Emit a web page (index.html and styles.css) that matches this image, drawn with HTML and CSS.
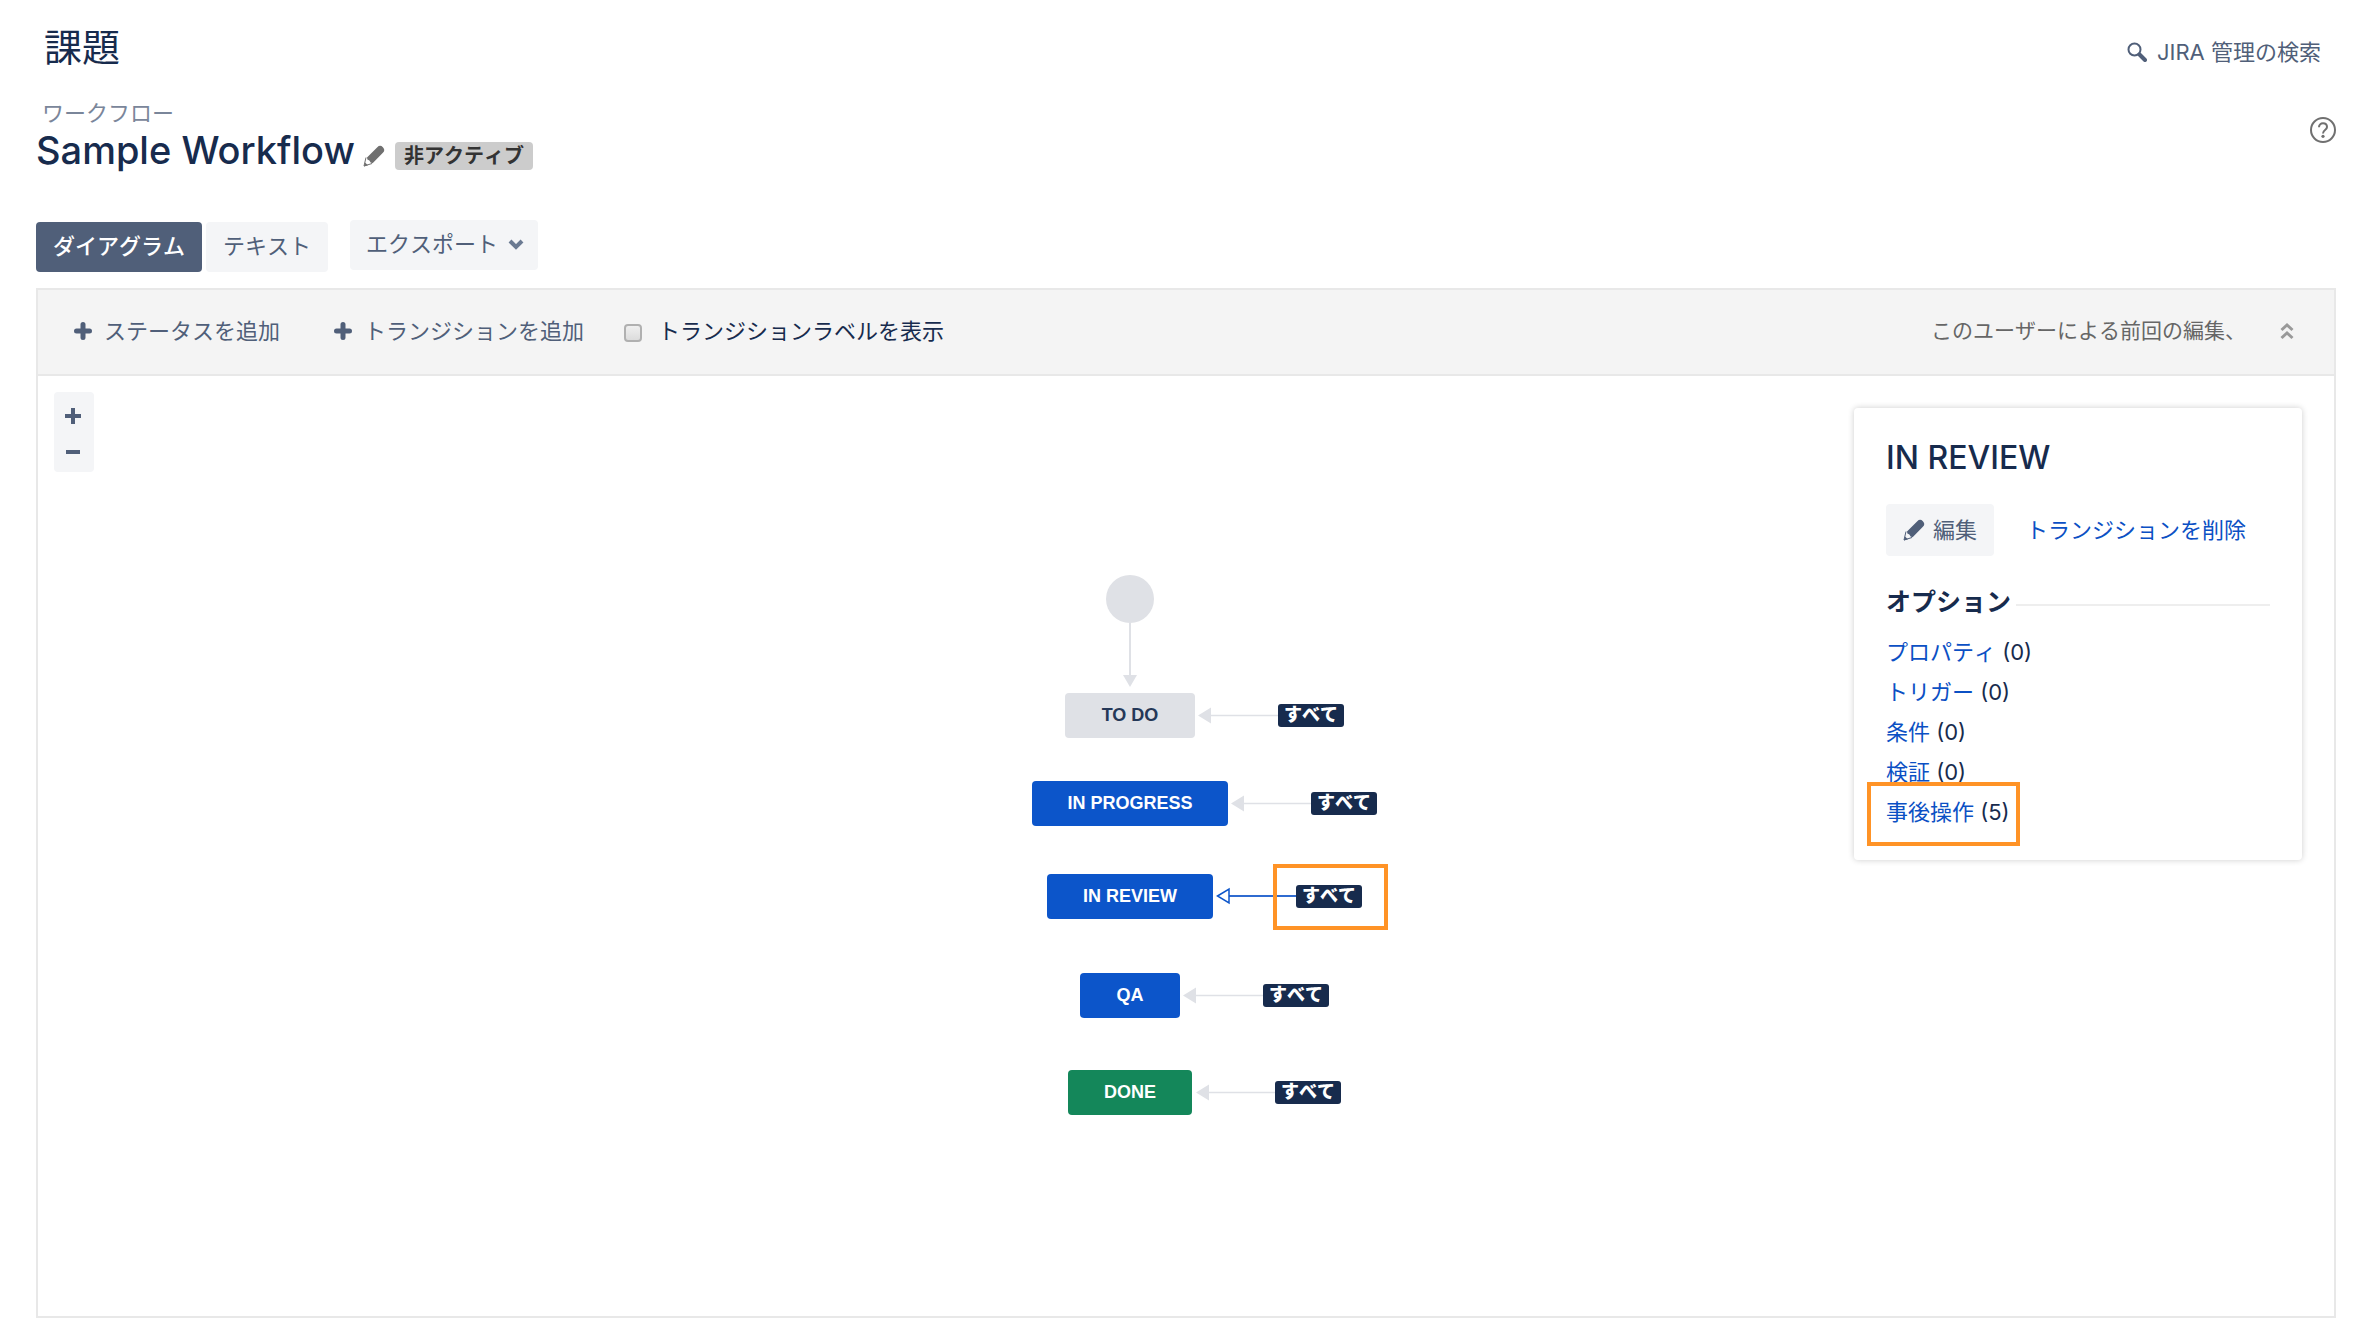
FILE: index.html
```html
<!DOCTYPE html>
<html lang="ja">
<head>
    <meta charset="UTF-8">
    <meta name="viewport" content="width=device-width, initial-scale=1.0">
    <title>Sample Workflow - JIRA</title>
    <link rel="stylesheet" href="styles.css">
</head>
<body>
    <svg class="sprite" aria-hidden="true">
        <symbol id="pencil" viewBox="0 0 22 22">
            <path d="M4 12.500 14.300 2.200a4 4 0 0 1 5.600 0 4 4 0 0 1 0 5.600L9.600 18.200 7.600 17.600 6.400 15.600 4.400 14.600z"/>
            <path d="M3 12.500 1 21l8-2.500" fill="none" stroke="currentColor" stroke-width="1"/>
            <path d="M1 21.500l1-4 3 2.800z"/>
        </symbol>
        <symbol id="plus" viewBox="0 0 18 18">
            <path d="M9 2.5v13M2.5 9h13" stroke="currentColor" stroke-width="5" stroke-linecap="round"/>
        </symbol>
    </svg>

    <header class="top">
        <h1>課題</h1>
        <a href="#" class="search">
            <svg width="20" height="20" viewBox="0 0 20 20"><circle cx="7.5" cy="7.5" r="6" fill="none" stroke="currentColor" stroke-width="2"/><path d="M12.5 12.5 18 18" stroke="currentColor" stroke-width="4" stroke-linecap="round"/></svg>
            JIRA 管理の検索
        </a>
    </header>

    <main>
        <div class="heading">
            <div>
                <a href="#" class="crumb">ワークフロー</a>
                <div class="title">
                    <h2>Sample Workflow</h2>
                    <button type="button" class="rename" aria-label="名前を編集"><svg width="22" height="22"><use href="#pencil"/></svg></button>
                    <span class="lozenge">非アクティブ</span>
                </div>
            </div>
            <a href="#" class="help" aria-label="ヘルプ">
                <svg width="26" height="26" viewBox="0 0 26 26"><circle cx="13" cy="13" r="12" fill="none" stroke="currentColor" stroke-width="2"/><path d="M9 10.200C9 7.900 10.700 6.300 13 6.300s4 1.500 4 3.700c0 3-4 3.100-4 6.400" fill="none" stroke="currentColor" stroke-width="2"/><circle cx="13" cy="19.300" r="1.600" fill="currentColor"/></svg>
            </a>
        </div>

        <div class="views">
            <button type="button" class="btn active">ダイアグラム</button>
            <button type="button" class="btn">テキスト</button>
            <button type="button" class="btn export">エクスポート
                <svg width="16" height="12" viewBox="0 0 16 12"><path d="M2 3l6 6 6-6" fill="none" stroke="currentColor" stroke-width="4"/></svg>
            </button>
        </div>

        <section class="designer">
            <div class="toolbar">
                <button type="button" class="add"><svg width="18" height="18"><use href="#plus"/></svg>ステータスを追加</button>
                <button type="button" class="add"><svg width="18" height="18"><use href="#plus"/></svg>トランジションを追加</button>
                <input type="checkbox" id="labels">
                <label for="labels">トランジションラベルを表示</label>
                <span class="edited">このユーザーによる前回の編集、</span>
                <button type="button" class="collapse" aria-label="折りたたむ">
                    <svg width="14" height="18" viewBox="0 0 14 18"><path d="M1.500 8 7 3l5.500 5M1.500 16 7 11l5.500 5" fill="none" stroke="currentColor" stroke-width="3"/></svg>
                </button>
            </div>

            <div class="canvas">
                <div class="zoom">
                    <button type="button" aria-label="拡大"><svg width="16" height="18" viewBox="0 0 16 18"><path d="M8 1v16M0 9h16" stroke="currentColor" stroke-width="4"/></svg></button>
                    <button type="button" aria-label="縮小"><svg width="16" height="18" viewBox="0 0 16 18"><path d="M1 9h14" stroke="currentColor" stroke-width="4"/></svg></button>
                </div>

                <div class="diagram">
                    <svg class="edges" width="424" height="560" viewBox="0 0 424 560">
                        <g stroke="#dfe1e6" stroke-width="2">
                            <path d="M156 59v53"/>
                            <path d="M236 151.500h68M270 239.500h67M222 431.500h67M234 528.500h67" stroke-width="1.500"/>
                        </g>
                        <g fill="#dfe1e6">
                            <path d="M149 111h14l-7 12z"/>
                            <path d="M224 151.500l13-8v16z"/>
                            <path d="M257 239.500l13-8v16z"/>
                            <path d="M209 431.500l13-8v16z"/>
                            <path d="M222 528.500l13-8v16z"/>
                        </g>
                        <path d="M255 332h67" stroke="#2f6bd0" stroke-width="2"/>
                        <path d="M243.500 332l11.500-7v14z" fill="#fff" stroke="#0c55ca" stroke-width="1.500"/>
                    </svg>
                    <div class="start"></div>
                    <div class="status new">TO DO</div>
                    <div class="status progress">IN PROGRESS</div>
                    <div class="status review">IN REVIEW</div>
                    <div class="status qa">QA</div>
                    <div class="status done">DONE</div>
                    <div class="all all-new">すべて</div>
                    <div class="all all-progress">すべて</div>
                    <div class="all all-review">すべて</div>
                    <div class="all all-qa">すべて</div>
                    <div class="all all-done">すべて</div>
                    <div class="mark mark-all"></div>
                </div>

                <aside class="panel">
                    <h3>IN REVIEW</h3>
                    <div class="actions">
                        <button type="button" class="btn edit"><svg width="22" height="22"><use href="#pencil"/></svg>編集</button>
                        <a href="#">トランジションを削除</a>
                    </div>
                    <h4>オプション</h4>
                    <ul>
                        <li><a href="#">プロパティ</a> (0)</li>
                        <li><a href="#">トリガー</a> (0)</li>
                        <li><a href="#">条件</a> (0)</li>
                        <li><a href="#">検証</a> (0)</li>
                        <li class="marked"><a href="#">事後操作</a> (5)</li>
                    </ul>
                </aside>
            </div>
        </section>
    </main>
</body>
</html>
```

FILE: styles.css
```css
*, *::after { box-sizing: border-box; }
body {
    display: flex;
    flex-direction: column;
    min-height: 100vh;
    margin: 0;
    padding: 28px 30px 26px 36px;
    background: #fff;
    color: #172b4d;
    font-family: Inter, "Noto Sans CJK JP", sans-serif;
    font-size: 22px;
    font-kerning: none;
    line-height: 32px;
}
h1, h2, h3, h4, ul { margin: 0; padding: 0; }
a { color: #0b50c4; text-decoration: none; }
svg { display: block; flex: none; fill: currentColor; }
button {
    padding: 0;
    border: none;
    background: none;
    color: #505f79;
    font: inherit;
    font-kerning: none;
    cursor: pointer;
}
.sprite { position: absolute; width: 0; height: 0; }

/* page header */
.top {
    display: flex;
    justify-content: space-between;
    padding: 0 15px 0 8px;
}
h1 { font-size: 38px; font-weight: 400; line-height: 38px; }
.search {
    display: flex;
    align-items: center;
    gap: 10px;
    height: 48px;
    color: #505f79;
}
.heading {
    display: flex;
    justify-content: space-between;
    margin-top: 24px;
}
.crumb {
    display: block;
    margin-left: 6px;
    color: #7a869a;
    line-height: 26px;
}
.title { display: flex; align-items: center; height: 48px; }
h2 { font-size: 38px; font-weight: 500; font-kerning: normal; line-height: 48px; }
.rename { margin: 12px 10px 0 8px; color: #707070; }
.lozenge {
    margin-top: 12px;
    padding: 0 9px;
    border-radius: 4px;
    background: #ccc;
    color: #333;
    font-size: 20px;
    font-weight: 700;
    line-height: 28px;
}
.help { align-self: flex-start; margin-top: 17px; color: #707070; }

main { display: flex; flex: 1; flex-direction: column; }
.views { display: flex; gap: 4px; margin: 48px 0 16px; }
.btn {
    height: 50px;
    padding: 0 17px;
    border-radius: 4px;
    background: #f4f5f7;
}
.views .btn { padding-bottom: 2px; }
.btn.active { background: #505f79; color: #fff; font-weight: 500; }
.btn.export {
    display: flex;
    align-items: center;
    gap: 10px;
    margin: -2px 0 2px 18px;
    padding: 0 14px 2px 16px;
}
.export svg { color: #6b7a92; }

/* designer */
.designer {
    display: flex;
    flex: 1;
    flex-direction: column;
    border: 2px solid #e8e8e8;
}
.toolbar {
    display: flex;
    align-items: center;
    height: 86px;
    padding: 0 40px 2px 36px;
    border-bottom: 2px solid #e8e8e8;
    background: #f4f4f4;
}
.add { display: flex; align-items: center; gap: 12px; margin-right: 54px; }
.add + .add { margin-right: 40px; }
.toolbar input {
    appearance: none;
    width: 18px;
    height: 18px;
    margin: 4px 16px 0 0;
    border: 2px solid #b0b0b0;
    border-radius: 4px;
    background: linear-gradient(#efefef, #dcdcdc);
}
.edited { margin-left: auto; color: #666; font-size: 21px; }
.collapse { margin-left: 34px; color: #999; }

.canvas { position: relative; flex: 1; padding: 188px 0; }
.zoom {
    position: absolute;
    top: 16px;
    left: 16px;
    display: grid;
    width: 40px;
    height: 80px;
    padding: 6px 2px 2px 0;
    border-radius: 4px;
    background: #f4f5f7;
}
.zoom button { display: grid; place-items: center; }

.diagram {
    position: relative;
    width: 424px;
    height: 560px;
    margin: 0 auto;
}
.start {
    position: absolute;
    top: 11px;
    left: 132px;
    width: 48px;
    height: 48px;
    border-radius: 50%;
    background: #dfe1e6;
}
.edges { position: absolute; top: 0; left: 0; }
.status {
    position: absolute;
    height: 45px;
    border-radius: 4px;
    background: #0c55ca;
    color: #fff;
    font: bold 18px/44px "Liberation Sans", Arial, sans-serif;
    text-align: center;
}
.new { top: 129px; left: 91px; width: 130px; background: #dfe1e6; color: #253858; }
.progress { top: 217px; left: 58px; width: 196px; }
.review { top: 310px; left: 73px; width: 166px; }
.qa { top: 409px; left: 106px; width: 100px; }
.done { top: 506px; left: 94px; width: 124px; background: #14875a; }
.all {
    position: absolute;
    width: 66px;
    height: 23px;
    border-radius: 3px;
    background: #172b4d;
    color: #fff;
    font-size: 18px;
    font-weight: 900;
    line-height: 21px;
    text-align: center;
}
.all-new { top: 140px; left: 304px; }
.all-progress { top: 228px; left: 337px; }
.all-review { top: 321px; left: 322px; }
.all-qa { top: 420px; left: 289px; }
.all-done { top: 517px; left: 301px; }
.mark, .marked::after { position: absolute; border: 4px solid #ff9326; }
.mark-all { top: 300px; left: 299px; width: 115px; height: 66px; }

/* properties panel */
.panel {
    position: absolute;
    top: 32px;
    right: 32px;
    width: 448px;
    padding: 30px 32px 28px;
    border-radius: 4px;
    background: #fff;
    box-shadow: 0 0 6px rgba(0, 0, 0, 0.2);
}
h3 { font-size: 32px; font-weight: 500; font-kerning: normal; line-height: 40px; }
.actions { display: flex; align-items: center; gap: 32px; margin: 26px 0 28px; }
.edit { display: flex; align-items: center; gap: 8px; height: 52px; }
h4 {
    display: flex;
    align-items: center;
    gap: 5px;
    font-size: 25px;
    font-weight: 700;
    line-height: 36px;
}
h4::after { content: ""; flex: 1; height: 2px; margin-top: 6px; background: #eee; }
.panel ul { margin-top: 12px; list-style: none; }
.panel li { position: relative; line-height: 40px; }
.marked::after {
    content: "";
    top: -10px;
    left: -19px;
    width: 153px;
    height: 64px;
}
```
